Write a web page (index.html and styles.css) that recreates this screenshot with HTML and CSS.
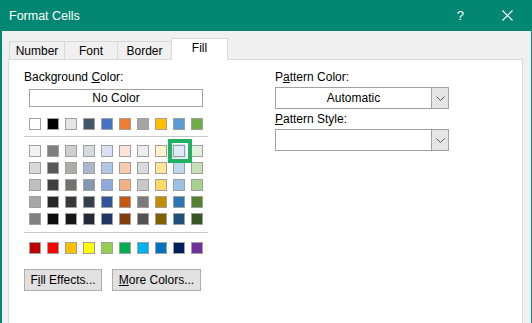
FILE: index.html
```html
<!DOCTYPE html>
<html>
<head>
<meta charset="utf-8">
<link rel="stylesheet" href="styles.css">
</head>
<body>
<div class="window">
  <div class="titlebar">
    <span class="title">Format Cells</span>
    <span class="help">?</span>
    <svg class="close" width="11" height="11" viewBox="0 0 11 11"><path d="M0.5 0.5 L10.5 10.5 M10.5 0.5 L0.5 10.5" stroke="#fff" stroke-width="1.2" fill="none"/></svg>
  </div>
  <div class="body">
    <div class="tabs">
      <div class="tab t-number">Number</div>
      <div class="tab t-font">Font</div>
      <div class="tab t-border">Border</div>
      <div class="tab active t-fill">Fill</div>
    </div>
    <div class="panel">
      <div class="left">
        <div class="label">Background <u>C</u>olor:</div>
        <div class="nocolor">No Color</div>
        <div class="row r-top">
          <span class="sw" style="background:#ffffff"></span>
          <span class="sw" style="background:#000000"></span>
          <span class="sw" style="background:#e7e6e6"></span>
          <span class="sw" style="background:#44546a"></span>
          <span class="sw" style="background:#4472c4"></span>
          <span class="sw" style="background:#ed7d31"></span>
          <span class="sw" style="background:#a5a5a5"></span>
          <span class="sw" style="background:#ffc000"></span>
          <span class="sw" style="background:#5b9bd5"></span>
          <span class="sw" style="background:#70ad47"></span>
        </div>
        <div class="sep"></div>
        <div class="tints">
          <div class="row">
            <span class="sw" style="background:#f2f2f2"></span>
            <span class="sw" style="background:#7f7f7f"></span>
            <span class="sw" style="background:#d0cece"></span>
            <span class="sw" style="background:#d6dce4"></span>
            <span class="sw" style="background:#d9e1f2"></span>
            <span class="sw" style="background:#fce4d6"></span>
            <span class="sw" style="background:#ededed"></span>
            <span class="sw" style="background:#fff2cc"></span>
            <span class="sw selected" style="background:#ddebf7"></span>
            <span class="sw" style="background:#e2efda"></span>
          </div>
          <div class="row">
            <span class="sw" style="background:#d9d9d9"></span>
            <span class="sw" style="background:#595959"></span>
            <span class="sw" style="background:#aeaaaa"></span>
            <span class="sw" style="background:#acb9ca"></span>
            <span class="sw" style="background:#b4c6e7"></span>
            <span class="sw" style="background:#f8cbad"></span>
            <span class="sw" style="background:#dbdbdb"></span>
            <span class="sw" style="background:#ffe699"></span>
            <span class="sw" style="background:#bdd7ee"></span>
            <span class="sw" style="background:#c6e0b4"></span>
          </div>
          <div class="row">
            <span class="sw" style="background:#bfbfbf"></span>
            <span class="sw" style="background:#404040"></span>
            <span class="sw" style="background:#757171"></span>
            <span class="sw" style="background:#8497b0"></span>
            <span class="sw" style="background:#8ea9db"></span>
            <span class="sw" style="background:#f4b084"></span>
            <span class="sw" style="background:#c9c9c9"></span>
            <span class="sw" style="background:#ffd966"></span>
            <span class="sw" style="background:#9bc2e6"></span>
            <span class="sw" style="background:#a9d08e"></span>
          </div>
          <div class="row">
            <span class="sw" style="background:#a6a6a6"></span>
            <span class="sw" style="background:#262626"></span>
            <span class="sw" style="background:#3a3838"></span>
            <span class="sw" style="background:#333f4f"></span>
            <span class="sw" style="background:#305496"></span>
            <span class="sw" style="background:#c65911"></span>
            <span class="sw" style="background:#7b7b7b"></span>
            <span class="sw" style="background:#bf8f00"></span>
            <span class="sw" style="background:#2f75b5"></span>
            <span class="sw" style="background:#548235"></span>
          </div>
          <div class="row">
            <span class="sw" style="background:#808080"></span>
            <span class="sw" style="background:#0d0d0d"></span>
            <span class="sw" style="background:#161616"></span>
            <span class="sw" style="background:#222b35"></span>
            <span class="sw" style="background:#203764"></span>
            <span class="sw" style="background:#833c0c"></span>
            <span class="sw" style="background:#525252"></span>
            <span class="sw" style="background:#806000"></span>
            <span class="sw" style="background:#1f4e78"></span>
            <span class="sw" style="background:#375623"></span>
          </div>
        </div>
        <div class="sep sep2"></div>
        <div class="row r-std">
          <span class="sw" style="background:#c00000"></span>
          <span class="sw" style="background:#ff0000"></span>
          <span class="sw" style="background:#ffc000"></span>
          <span class="sw" style="background:#ffff00"></span>
          <span class="sw" style="background:#92d050"></span>
          <span class="sw" style="background:#00b050"></span>
          <span class="sw" style="background:#00b0f0"></span>
          <span class="sw" style="background:#0070c0"></span>
          <span class="sw" style="background:#002060"></span>
          <span class="sw" style="background:#7030a0"></span>
        </div>
        <div class="buttons">
          <div class="btn b-fill">F<u>i</u>ll Effects...</div>
          <div class="btn b-more"><u>M</u>ore Colors...</div>
        </div>
      </div>
      <div class="right">
        <div class="label">P<u>a</u>ttern Color:</div>
        <div class="combo">
          <span class="value">Automatic</span>
          <span class="drop"><svg width="9" height="5" viewBox="0 0 9 5"><path d="M0.5 0.5 L4.5 4.5 L8.5 0.5" stroke="#555" stroke-width="1" fill="none"/></svg></span>
        </div>
        <div class="label l2"><u>P</u>attern Style:</div>
        <div class="combo">
          <span class="value"></span>
          <span class="drop"><svg width="9" height="5" viewBox="0 0 9 5"><path d="M0.5 0.5 L4.5 4.5 L8.5 0.5" stroke="#555" stroke-width="1" fill="none"/></svg></span>
        </div>
      </div>
    </div>
  </div>
</div>
</body>
</html>
```
FILE: styles.css
```css
*, *::before, *::after { box-sizing: border-box; }
html, body { margin: 0; padding: 0; }
body {
  width: 532px;
  height: 323px;
  overflow: hidden;
  font-family: "Liberation Sans", Arial, sans-serif;
  font-size: 12px;
  color: #000;
}
u { text-decoration: underline; text-underline-offset: 1px; }
.window {
  width: 532px;
  height: 323px;
  background: #f0f0f0;
  border-left: 2px solid #038672;
  border-right: 1px solid #038672;
  display: flex;
  flex-direction: column;
}
.titlebar {
  height: 31px;
  flex: none;
  background: #038672;
  color: #fff;
  display: flex;
  align-items: center;
  margin-left: -2px;
  margin-right: -1px;
  padding-left: 9px;
}
.title { font-size: 12.5px; flex: 1; }
.help { font-size: 13px; margin-right: 38px; }
.close { margin-right: 19px; }
.body {
  flex: 1;
  padding: 7px 8px 0 6px;
  display: flex;
  flex-direction: column;
}
.tabs {
  display: flex;
  align-items: flex-end;
  height: 21px;
  padding-left: 1px;
  position: relative;
  z-index: 1;
}
.tab {
  height: 18px;
  border: 1px solid #d9d9d9;
  border-bottom: none;
  border-right: none;
  text-align: center;
  line-height: 18px;
  background: #f0f0f0;
}
.t-number { width: 55px; }
.t-font { width: 53px; }
.t-border { width: 54px; }
.tab.active {
  width: 57px;
  height: 22px;
  margin-bottom: -1px;
  background: #fff;
  border-right: 1px solid #d9d9d9;
  line-height: 18px;
}
.panel {
  flex: 1;
  background: #fff;
  border: 1px solid #d9d9d9;
  border-bottom: none;
  display: flex;
}
.left {
  width: 250px;
  padding: 9px 0 0 15px;
}
.label { height: 17px; line-height: 17px; }
.nocolor {
  margin: 3px 0 0 5px;
  width: 174px;
  height: 18px;
  border: 1px solid #a0a0a0;
  text-align: center;
  line-height: 16px;
}
.row {
  display: flex;
  gap: 6px;
  margin-left: 5px;
  height: 12px;
}
.r-top { margin-top: 11px; }
.sw {
  width: 12px;
  height: 12px;
  border: 1px solid #a0a0a0;
  flex: none;
}
.sep {
  width: 184px;
  height: 1px;
  background: #c8c8c8;
  margin-top: 6px;
}
.tints {
  margin-top: 8px;
  display: flex;
  flex-direction: column;
  gap: 5px;
}
.sw.selected {
  position: relative;
  z-index: 2;
  outline: 1px solid #cfe6f5;
  outline-offset: 0;
}
.sw.selected::after {
  content: "";
  position: absolute;
  left: -6px;
  top: -7px;
  width: 24px;
  height: 24px;
  border: 4px solid #21b163;
}
.sep2 { margin-top: 7px; }
.r-std { margin-top: 9px; }
.buttons {
  display: flex;
  gap: 10px;
  margin-top: 15px;
}
.btn {
  height: 22px;
  background: #e1e1e1;
  border: 1px solid #adadad;
  line-height: 20px;
  text-align: center;
}
.b-fill { width: 78px; }
.b-more { width: 89px; }
.right {
  padding: 9px 0 0 16px;
}
.combo {
  width: 174px;
  height: 22px;
  border: 1px solid #a0a0a0;
  display: flex;
  margin-top: 1px;
}
.combo .value {
  flex: 1;
  text-align: center;
  line-height: 20px;
}
.combo .drop {
  width: 17px;
  background: #e5e5e5;
  border-left: 1px solid #a0a0a0;
  display: flex;
  align-items: center;
  justify-content: center;
}
.l2 { margin-top: 2px; }
```
